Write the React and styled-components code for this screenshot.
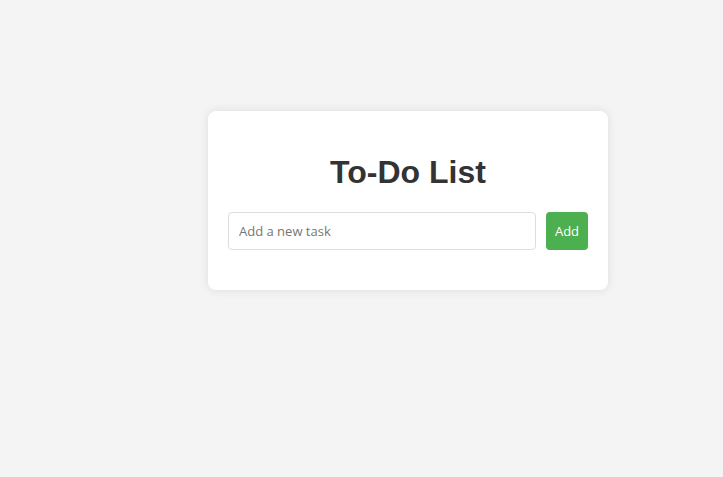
import React, { useState } from "react";
import styled, { createGlobalStyle } from "styled-components";

const Global = createGlobalStyle`
  html, body { margin: 0; padding: 0; background: #f4f4f4; }
  body { font-family: "Liberation Sans", Arial, sans-serif; }
`;

const Page = styled.div`
  min-height: 477px;
  box-sizing: border-box;
  padding: 111px 0 0 208px;
`;

const Card = styled.div`
  width: 400px;
  box-sizing: border-box;
  background: #fff;
  padding: 20px;
  border-radius: 8px;
  box-shadow: 0 0 10px rgba(0, 0, 0, 0.1);
`;

const Title = styled.h1`
  margin: 22.5px 0 21.5px;
  text-align: center;
  color: #333;
  font-family: "Liberation Sans", Arial, sans-serif;
  font-size: 32px;
  font-weight: bold;
`;

const Row = styled.div`
  display: flex;
  gap: 10px;
  margin-bottom: 20px;
`;

const Input = styled.input`
  flex: 1;
  height: 38px;
  box-sizing: border-box;
  padding: 10px;
  border: 1px solid #ddd;
  border-radius: 4px;
  font-family: "Open Sans", "Noto Sans", sans-serif;
  font-size: 13px;
  color: #333;
  outline: none;
  &::placeholder { color: #767676; }
`;

const Button = styled.button`
  height: 38px;
  width: 42px;
  box-sizing: border-box;
  padding: 0;
  border: none;
  border-radius: 4px;
  background: #4caf50;
  color: #fff;
  font-family: "Open Sans", "Noto Sans", sans-serif;
  font-size: 13px;
  cursor: pointer;
`;

export default function App() {
  const [text, setText] = useState("");
  return (
    <>
      <Global />
      <Page>
        <Card>
          <Title>To-Do List</Title>
          <Row>
            <Input
              placeholder="Add a new task"
              value={text}
              onChange={(e) => setText(e.target.value)}
            />
            <Button>Add</Button>
          </Row>
        </Card>
      </Page>
    </>
  );
}
